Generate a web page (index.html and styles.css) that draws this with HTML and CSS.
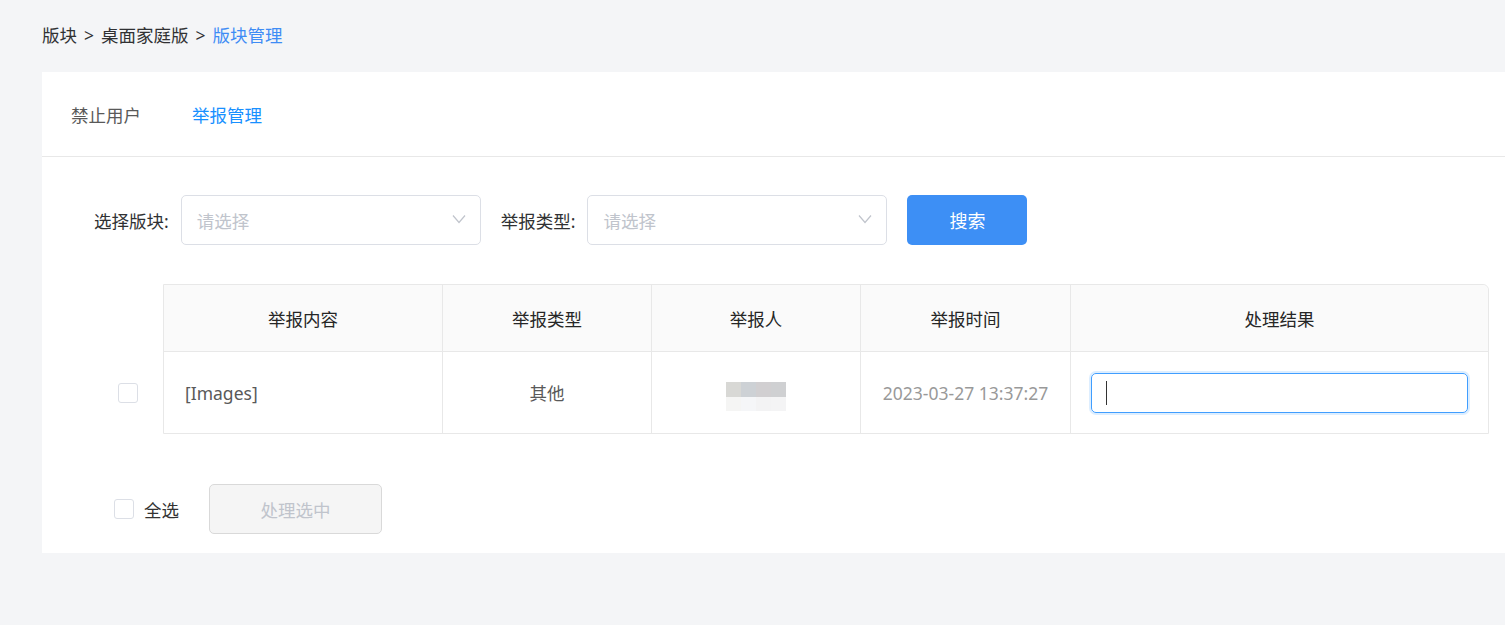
FILE: index.html
```html
<!DOCTYPE html>
<html lang="zh">
<head>
<meta charset="utf-8">
<title>版块管理</title>
<link rel="stylesheet" href="styles.css">
</head>
<body>
<div class="page">
  <div class="breadcrumb">
    <span class="crumb">版块</span><span class="sep">&gt;</span><span class="crumb">桌面家庭版</span><span class="sep">&gt;</span><span class="crumb current">版块管理</span>
  </div>
  <div class="card">
    <div class="tabs">
      <div class="tab">禁止用户</div>
      <div class="tab active">举报管理</div>
    </div>
    <div class="body">
      <div class="filters">
        <label class="flabel">选择版块:</label>
        <div class="select">
          <span class="placeholder">请选择</span>
          <svg class="chev" width="14" height="10" viewBox="0 0 14 10"><polyline points="1,1.5 7,8.5 13,1.5" fill="none" stroke="#c0c4cc" stroke-width="1.2"/></svg>
        </div>
        <label class="flabel second">举报类型:</label>
        <div class="select">
          <span class="placeholder">请选择</span>
          <svg class="chev" width="14" height="10" viewBox="0 0 14 10"><polyline points="1,1.5 7,8.5 13,1.5" fill="none" stroke="#c0c4cc" stroke-width="1.2"/></svg>
        </div>
        <button class="btn-primary">搜索</button>
      </div>

      <div class="table-wrap">
        <div class="check-col">
          <div class="check-head"></div>
          <div class="check-cell"><span class="checkbox"></span></div>
        </div>
        <table class="grid">
          <colgroup>
            <col class="c1"><col class="c2"><col class="c3"><col class="c4"><col class="c5">
          </colgroup>
          <thead>
            <tr>
              <th>举报内容</th>
              <th>举报类型</th>
              <th>举报人</th>
              <th>举报时间</th>
              <th class="last">处理结果</th>
            </tr>
          </thead>
          <tbody>
            <tr>
              <td class="left">[Images]</td>
              <td>其他</td>
              <td>
                <div class="blur">
                  <span class="b1"></span><span class="b2"></span><span class="b3"></span><span class="b4"></span>
                  <span class="b5"></span><span class="b6"></span><span class="b7"></span><span class="b8"></span>
                </div>
              </td>
              <td class="time">2023-03-27 13:37:27</td>
              <td><div class="result-input"><span class="caret"></span></div></td>
            </tr>
          </tbody>
        </table>
      </div>

      <div class="footer">
        <span class="checkbox"></span>
        <span class="all">全选</span>
        <button class="btn-disabled">处理选中</button>
      </div>
    </div>
  </div>
</div>
</body>
</html>
```

FILE: styles.css
```css
* { box-sizing: border-box; }
html, body {
  margin: 0;
  padding: 0;
  background: #f4f5f7;
  overflow: hidden;
}
body {
  font-family: "Noto Sans", "Noto Sans CJK SC", sans-serif;
  font-size: 17.5px;
  color: #333;
  width: 1505px;
  height: 625px;
}
.page {
  padding-left: 42px;
}
.breadcrumb {
  height: 72px;
  display: flex;
  align-items: center;
  padding-bottom: 3px;
  color: #303133;
  font-size: 17.5px;
}
.sep {
  margin: 0 7px;
  color: #303133;
}
.current { color: #3e8cf5; }

.card {
  background: #fff;
  height: 481px;
}
.tabs {
  height: 85px;
  border-bottom: 1px solid #e8e8e8;
  display: flex;
  align-items: center;
  padding-left: 29px;
  padding-bottom: 0;
}
.tab {
  color: #595959;
  margin-right: 51px;
}
.tab.active { color: #1890ff; }

.body { padding-top: 38px; }

.filters {
  display: flex;
  align-items: center;
  padding-left: 52px;
  height: 50px;
}
.flabel {
  color: #303133;
  margin-right: 12px;
}
.flabel.second { margin-left: 20px; margin-right: 12px; }
.select {
  width: 300px;
  height: 50px;
  border: 1px solid #dcdfe6;
  border-radius: 5px;
  display: flex;
  align-items: center;
  justify-content: space-between;
  padding: 0 14px 0 15px;
}
.placeholder { color: #c0c4cc; }
.chev { margin-top: -3px; }
.btn-primary {
  margin-left: 20px;
  width: 120px;
  height: 50px;
  border: none;
  border-radius: 5px;
  background: #3d8ff5;
  color: #fff;
  font-family: inherit;
  font-size: 18px;
}

.table-wrap {
  display: flex;
  margin-top: 39px;
  padding-left: 76px;
}
.check-col {
  width: 45px;
  display: flex;
  flex-direction: column;
}
.check-head { height: 67px; }
.check-cell {
  height: 82px;
  display: flex;
  align-items: center;
  padding-top: 2px;
}
.checkbox {
  display: inline-block;
  width: 20px;
  height: 20px;
  border: 1px solid #dcdfe6;
  border-radius: 3px;
  background: #fff;
}

.grid {
  width: 1326px;
  border-collapse: separate;
  border-spacing: 0;
  border: 1px solid #e8e8e8;
  border-top-right-radius: 6px;
  table-layout: fixed;
}
.c1 { width: 279px; }
.c2 { width: 209px; }
.c3 { width: 209px; }
.c4 { width: 210px; }
.c5 { width: auto; }
.grid th {
  height: 67px;
  background: #fafafa;
  font-weight: normal;
  color: #262626;
  border-right: 1px solid #e8e8e8;
  border-bottom: 1px solid #e8e8e8;
  text-align: center;
  padding: 0;
}
.grid th.last { border-right: none; border-top-right-radius: 6px; }
.grid td {
  height: 81px;
  text-align: center;
  border-right: 1px solid #e8e8e8;
  color: #595959;
  padding: 0;
}
.grid td:last-child { border-right: none; }
.grid td.left {
  text-align: left;
  padding-left: 21px;
}
.grid td.time { color: #999; }

.blur {
  display: grid;
  grid-template-columns: repeat(4, 15px);
  grid-template-rows: 15px 14px;
  width: 60px;
  margin: 8px auto 0;
}
.b1 { background: #d8d8d5; }
.b2 { background: #cdd1d5; }
.b3 { background: #d1cfd1; }
.b4 { background: #cfd0d2; }
.b5 { background: #f5f5f4; }
.b6 { background: #f5f6f8; }
.b7 { background: #f3f3f4; }
.b8 { background: #f4f4f5; }

.result-input {
  margin: 0 20px;
  height: 40px;
  border: 1px solid #409eff;
  border-radius: 5px;
  box-shadow: 0 0 0 2px rgba(64, 158, 255, 0.18);
  display: flex;
  align-items: center;
  padding-left: 14px;
}
.caret {
  width: 1px;
  height: 24px;
  background: #333;
}

.footer {
  display: flex;
  align-items: center;
  margin-top: 50px;
  padding-left: 72px;
  height: 50px;
}
.all {
  margin-left: 10px;
  color: #333;
}
.btn-disabled {
  margin-left: 30px;
  width: 173px;
  height: 50px;
  background: #f5f5f5;
  border: 1px solid #d9d9d9;
  border-radius: 5px;
  color: #c0c4cc;
  font-family: inherit;
  font-size: 17.5px;
}
```
